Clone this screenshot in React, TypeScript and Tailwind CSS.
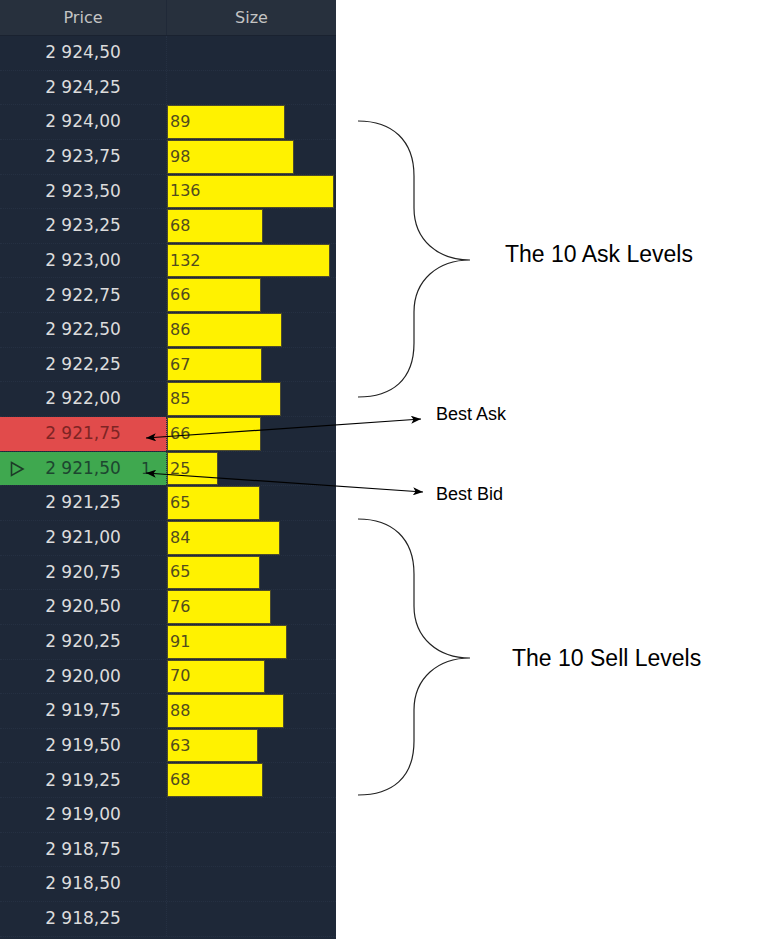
import React from "react";

type Row = { price: string; size?: number; kind?: "ask" | "bid" };

const rows: Row[] = [
  { price: "2 924,50" },
  { price: "2 924,25" },
  { price: "2 924,00", size: 89 },
  { price: "2 923,75", size: 98 },
  { price: "2 923,50", size: 136 },
  { price: "2 923,25", size: 68 },
  { price: "2 923,00", size: 132 },
  { price: "2 922,75", size: 66 },
  { price: "2 922,50", size: 86 },
  { price: "2 922,25", size: 67 },
  { price: "2 922,00", size: 85 },
  { price: "2 921,75", size: 66, kind: "ask" },
  { price: "2 921,50", size: 25, kind: "bid" },
  { price: "2 921,25", size: 65 },
  { price: "2 921,00", size: 84 },
  { price: "2 920,75", size: 65 },
  { price: "2 920,50", size: 76 },
  { price: "2 920,25", size: 91 },
  { price: "2 920,00", size: 70 },
  { price: "2 919,75", size: 88 },
  { price: "2 919,50", size: 63 },
  { price: "2 919,25", size: 68 },
  { price: "2 919,00" },
  { price: "2 918,75" },
  { price: "2 918,50" },
  { price: "2 918,25" },
];

const mono = { fontFamily: '"DejaVu Sans", Verdana, sans-serif' };
const arial = { fontFamily: '"Liberation Sans", Arial, sans-serif' };

export default function App() {
  return (
    <div className="relative flex w-[768px] h-[939px] bg-white overflow-hidden">
      <div className="w-[336px] shrink-0 bg-[#1e2838] flex flex-col text-[16px]" style={mono}>
        <div className="flex h-[36px] shrink-0 bg-[#27303d] text-[#c4c4c4] border-b border-[#1a2230]">
          <div className="w-[167px] flex items-center justify-center border-r border-[#202938]">Price</div>
          <div className="flex-1 flex items-center justify-center">Size</div>
        </div>
        {rows.map((r) => (
          <PriceRow key={r.price} row={r} />
        ))}
      </div>
      <div className="flex-1" />

      <svg className="absolute inset-0" width={768} height={939} viewBox="0 0 768 939" fill="none" aria-hidden="true">
        <defs>
          <marker id="ah" viewBox="0 0 10 8" refX="10" refY="4" markerWidth="10" markerHeight="8" orient="auto-start-reverse" markerUnits="userSpaceOnUse">
            <path d="M0 0 L10 4 L0 8 L2.5 4 Z" fill="#000" />
          </marker>
        </defs>
        <path d="M358 121 C392 121 414 140 414 176 L414 208 C414 240 438 260 470 260 C438 260 414 280 414 312 L414 343 C414 380 392 397 358 397" stroke="#222" strokeWidth={1.2} />
        <path d="M358 519 C392 519 414 538 414 574 L414 606 C414 638 438 658 470 658 C438 658 414 678 414 710 L414 741 C414 778 392 795 358 795" stroke="#222" strokeWidth={1.2} />
        <line x1={146} y1={438} x2={421} y2={419} stroke="#000" strokeWidth={1.2} markerStart="url(#ah)" markerEnd="url(#ah)" />
        <line x1={146} y1={473} x2={423} y2={492} stroke="#000" strokeWidth={1.2} markerStart="url(#ah)" markerEnd="url(#ah)" />
      </svg>

      <div className="absolute left-[505px] top-[240px] text-[23px] leading-[28px] text-black" style={arial}>The 10 Ask Levels</div>
      <div className="absolute left-[512px] top-[644px] text-[23px] leading-[28px] text-black" style={arial}>The 10 Sell Levels</div>
      <div className="absolute left-[436px] top-[403px] text-[18px] leading-[22px] text-black" style={arial}>Best Ask</div>
      <div className="absolute left-[436px] top-[483px] text-[18px] leading-[22px] text-black" style={arial}>Best Bid</div>
    </div>
  );
}

function PriceRow({ row }: { row: Row }) {
  const priceBg =
    row.kind === "ask" ? "bg-[#e14b4b] text-[#7e2424]" : row.kind === "bid" ? "bg-[#3fa84f] text-[#1d4630]" : "text-[#dcdcdc]";
  return (
    <div className="flex h-[34.65px] shrink-0 border-b border-dotted border-[#253042]">
      <div className={`relative w-[167px] flex items-center justify-center text-[17px] border-r border-dotted border-[#253042] ${priceBg}`}>
        {row.kind === "bid" && (
          <>
            <svg className="absolute left-[10px] top-1/2 -translate-y-1/2" width={15} height={16} viewBox="0 0 15 16" aria-hidden="true">
              <path d="M1.5 1.5 L13 8 L1.5 14.5 Z" fill="none" stroke="#1d3b28" strokeWidth={1.6} strokeLinejoin="miter" />
            </svg>
            <span className="absolute left-[141px] text-[16px]">1</span>
          </>
        )}
        {row.price}
      </div>
      <div className="flex-1 flex items-stretch">
        {row.size !== undefined && (
          <div
            className="bg-[#fff200] border border-[#4d4b2a] text-[#514c1e] flex items-center pl-[2px]"
            style={{ width: `${Math.round(row.size * 1.045 + 25)}px` }}
          >
            {row.size}
          </div>
        )}
      </div>
    </div>
  );
}
